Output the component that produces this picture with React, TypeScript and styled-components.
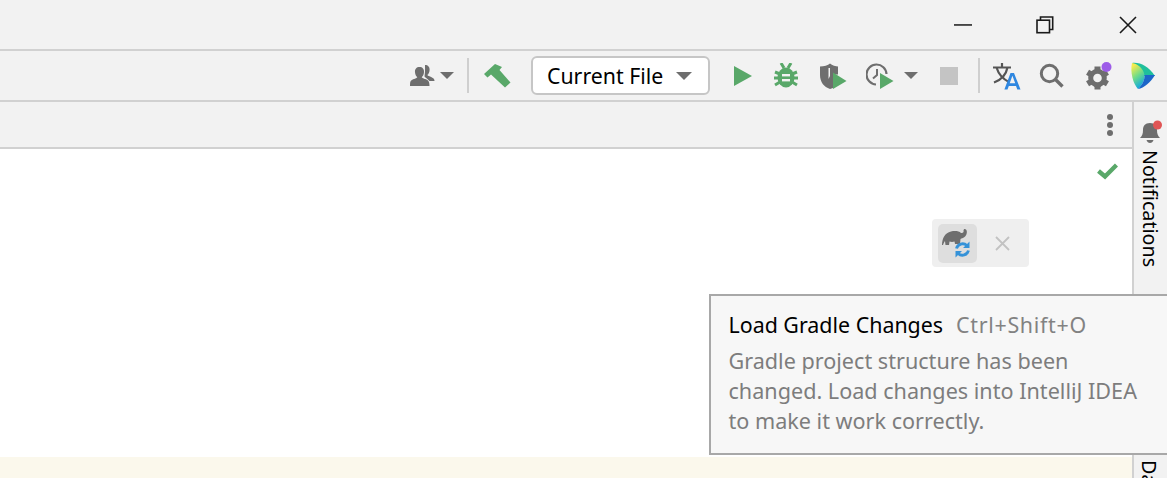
import React from "react";
import styled, { createGlobalStyle } from "styled-components";

const Global = createGlobalStyle`
  html, body { margin: 0; padding: 0; height: 100%; overflow: hidden; background: #f2f2f2; }
  #root { height: 100%; }
  * { box-sizing: border-box; }
`;

const FONT = `"Noto Sans", "Open Sans", "Liberation Sans", sans-serif`;

const Frame = styled.div`
  position: relative;
  width: 1167px;
  height: 478px;
  overflow: hidden;
  display: flex;
  flex-direction: column;
  font-family: ${FONT};
  background: #f2f2f2;
`;

const TitleBar = styled.div`
  height: 51px;
  flex: none;
  border-bottom: 2px solid #d1d1d1;
  display: flex;
  justify-content: flex-end;
`;

const WinButton = styled.div`
  width: 82px;
  height: 49px;
  padding-top: 1px;
  display: flex;
  align-items: center;
  justify-content: center;
  &:last-child {
    width: 78px;
    margin-left: 3px;
  }
`;

const Toolbar = styled.div`
  height: 51px;
  flex: none;
  border-bottom: 2px solid #d1d1d1;
  display: flex;
  align-items: center;
  justify-content: flex-end;
  padding-right: 11px;
`;

const ToolIcon = styled.div<{ $w?: number; $ml?: number }>`
  width: ${(p) => p.$w ?? 26}px;
  height: 30px;
  margin-left: ${(p) => p.$ml ?? 0}px;
  flex: none;
  display: flex;
  align-items: center;
  justify-content: center;
`;

const Sep = styled.div<{ $ml: number }>`
  width: 2px;
  height: 35px;
  margin-left: ${(p) => p.$ml}px;
  background: #cfcfcf;
  flex: none;
`;

const ConfigBox = styled.div`
  width: 179px;
  height: 39px;
  margin-left: 20px;
  flex: none;
  background: #fff;
  border: 2px solid #c6c6c6;
  border-radius: 6px;
  display: flex;
  align-items: center;
  padding-left: 14px;
  color: #000;
  font-size: 21.3px;
  white-space: nowrap;
`;

const Caret = styled.span<{ $ml: number; $s?: number }>`
  width: 0;
  height: 0;
  margin-left: ${(p) => p.$ml}px;
  border-left: ${(p) => p.$s ?? 8}px solid transparent;
  border-right: ${(p) => p.$s ?? 8}px solid transparent;
  border-top: ${(p) => p.$s ?? 8}px solid #6e6e6e;
  flex: none;
`;

const Body = styled.div`
  flex: 1;
  display: flex;
  min-height: 0;
`;

const Main = styled.div`
  flex: 1;
  display: flex;
  flex-direction: column;
  min-width: 0;
`;

const TabRow = styled.div`
  height: 47px;
  flex: none;
  border-bottom: 2px solid #d1d1d1;
  display: flex;
  align-items: center;
  justify-content: flex-end;
  padding-right: 18px;
`;

const Editor = styled.div`
  flex: 1;
  background: #fff;
  display: flex;
  justify-content: flex-end;
  padding: 14px 14px 0 0;
`;

const InfoBar = styled.div`
  height: 21px;
  flex: none;
  background: #fbf8ec;
`;

const Strip = styled.div`
  width: 35px;
  flex: none;
  border-left: 2px solid #d1d1d1;
  display: flex;
  flex-direction: column;
  align-items: center;
  padding-top: 18px;
  position: relative;
`;

const VerticalLabel = styled.div`
  writing-mode: vertical-rl;
  font-size: 19.7px;
  line-height: 20px;
  color: #000;
  white-space: nowrap;
  margin: 4px 2px 0 0;
`;

const BottomLabel = styled(VerticalLabel)`
  position: absolute;
  top: 354px;
  left: 5px;
  height: 22px;
  overflow: hidden;
  margin: 4px 0 0;
`;

const FloatBar = styled.div`
  position: absolute;
  left: 932px;
  top: 219px;
  width: 97px;
  height: 48px;
  background: #efefef;
  border-radius: 4px;
  display: flex;
  align-items: center;
  padding-left: 6px;
`;

const FloatAction = styled.div`
  width: 39px;
  height: 39px;
  background: #dedede;
  border-radius: 5px;
  display: flex;
  align-items: center;
  justify-content: center;
`;

const FloatClose = styled.div`
  margin-left: 18px;
  display: flex;
`;

const Tip = styled.div`
  position: absolute;
  left: 709px;
  top: 294px;
  width: 470px;
  height: 161px;
  background: #f7f7f7;
  border: 2px solid #a8a8a8;
  padding: 14px 0 0 17.5px;
`;

const TipHead = styled.div`
  display: flex;
  font-size: 21.4px;
  line-height: 30px;
  white-space: nowrap;
`;

const TipTitle = styled.span`
  color: #000;
`;

const TipKey = styled.span`
  color: #828282;
  margin-left: 13px;
  letter-spacing: 0.7px;
`;

const TipText = styled.div`
  color: #7d7d7d;
  font-size: 21.6px;
  line-height: 30px;
  margin-top: 6px;
  white-space: pre;
`;

const Minimize = () => (
  <svg width="18" height="2" style={{ display: "block" }}><rect width="18" height="1.5" y="0.2" fill="#1a1a1a" /></svg>
);
const Restore = () => (
  <svg width="18" height="18" viewBox="0 0 18 18" fill="none" stroke="#1a1a1a" strokeWidth="1.6">
    <rect x="1" y="4.2" width="12.5" height="12.5" />
    <path d="M4.5 4V1h12.2v12.5h-3" />
  </svg>
);
const CloseX = () => (
  <svg width="18" height="18" viewBox="0 0 18 18" stroke="#1a1a1a" strokeWidth="1.6"><path d="M1 1l16 16M17 1L1 17" /></svg>
);

const UserIcon = () => (
  <svg width="25" height="23" viewBox="0 0 25 23" fill="#6e6e6e">
    <path d="M15 1c3 0 4.800 2 4.600 5-.2 2.500-1 4-2.300 5 .5 1 3.500 1.500 5.500 3 1.200.8 1.700 1.500 1.700 3h-5c-1.500-2-4-3-5-4.500l.5-4.500c0-3 0-6 0-7z" />
    <path d="M9.500 3c3 0 4.800 2 4.500 5.200-.2 2.300-1 4-2.300 5 .6 1.200 4 1.600 6 3 1 .8 1.800 2 1.800 5.800H0c0-3.800.3-5 1.500-5.800 2-1.400 5.200-1.800 5.800-3C6 12.200 5.200 10.500 5 8.200 4.700 5 6.500 3 9.500 3z" />
    <path d="M14.500 4.200c-.6-1-1.100-1.500-1.600-1.800M13.500 13.500l1 .8" stroke="#f2f2f2" strokeWidth="1" fill="none" />
  </svg>
);
const Hammer = () => (
  <svg width="27" height="24" viewBox="0 0 27 24" fill="#59a869">
    <path d="M0 10 11 0l7 3-2.500 3L26.500 18.500 21 23.500 7 10.500 3.500 13.500z" />
  </svg>
);
const Play = ({ size = 20 }: { size?: number }) => (
  <svg width={size} height={size} viewBox="0 0 20 20" fill="#59a869"><path d="M1 0l18 10L1 20z" /></svg>
);
const Bug = () => (
  <svg width="24" height="25" viewBox="0 0 24 25">
    <path fill="none" stroke="#59a869" strokeWidth="3" d="M1 9l5 2M23 9l-5 2M0 15h5M24 15h-5M1 22l5-3M23 22l-5-3M7 0l3 5M17 0l-3 5" />
    <ellipse cx="12" cy="14.500" rx="8.500" ry="10" fill="#59a869" />
    <rect x="8" y="11" width="8" height="2.400" fill="#f2f2f2" />
    <rect x="8" y="16" width="8" height="2.400" fill="#f2f2f2" />
  </svg>
);
const Coverage = () => (
  <svg width="28" height="26" viewBox="0 0 28 26">
    <path fill="#6e6e6e" d="M1 3.500C5 3.500 9 2.500 11 .5c2 2 6 3 8 3v8h-3v12l-2 1.500-3 1C5 24 1 19 1 12z" />
    <path fill="#f2f2f2" d="M9.500 5h1.500v8l-1.500 3z" />
    <path fill="#59a869" d="M14 9.500 27.500 18 14 26z" />
  </svg>
);
const Profiler = () => (
  <svg width="28" height="26" viewBox="0 0 28 26">
    <path fill="none" stroke="#6e6e6e" strokeWidth="2.200" d="M10 21.500A10 10 0 1 1 20.500 11" />
    <path fill="none" stroke="#6e6e6e" strokeWidth="2" d="M11 6v6l-4 3.500" />
    <path fill="#59a869" d="M14 10l13.500 8L14 26z" />
  </svg>
);
const Stop = () => (
  <svg width="18" height="18"><rect width="18" height="18" fill="#c4c4c4" /></svg>
);
const Translate = () => (
  <svg width="29" height="28" viewBox="0 0 29 28">
    <path fill="none" stroke="#555" strokeWidth="2.200" d="M1 5.500h18M10 1v4.500M15.500 5.500C14 13 9 18 2 20.500M4.500 5.500C6.500 12 11 17 17 20" />
    <path fill="#2f87e0" d="M18.500 11h3.500L28.500 27.500h-3.200l-1.300-3.600h-7.200l-1.300 3.600h-3.100zm4.700 10.200-2.800-7.400-2.700 7.400z" />
  </svg>
);
const Search = () => (
  <svg width="25" height="25" viewBox="0 0 25 25" fill="none" stroke="#6e6e6e"><circle cx="10.500" cy="10.500" r="8.200" strokeWidth="3" /><path d="M16.500 16.500l7 7" strokeWidth="3.400" /></svg>
);
const Gear = () => (
  <svg width="26" height="28" viewBox="0 0 26 28">
    <g transform="translate(0 3)">
      <circle cx="11.500" cy="13" r="6.800" fill="none" stroke="#6e6e6e" strokeWidth="5" />
      {[0, 60, 120, 180, 240, 300].map((a) => (
        <rect key={a} x="8.500" y="1.500" width="6" height="4.500" fill="#6e6e6e" transform={`rotate(${a} 11.500 13)`} />
      ))}
    </g>
    <circle cx="20.500" cy="5" r="5" fill="#9d5ce8" />
  </svg>
);
const Logo = () => (
  <svg width="26" height="28" viewBox="0 0 26 28">
    <defs>
      <linearGradient id="lg" x1="0.100" y1="0" x2="0.500" y2="1">
        <stop offset="0.100" stopColor="#f6ec4e" />
        <stop offset="0.550" stopColor="#6ddb8a" />
        <stop offset="1" stopColor="#12a8e0" />
      </linearGradient>
    </defs>
    <path fill="#1fbf9c" d="M2 1C10 0 18 4 25 14L14 14z" />
    <path fill="url(#lg)" d="M2 1C8 2 13 6 14.500 13 15 18 12 23 8 27 3 22 0 10 2 1z" />
    <path fill="#1c66c8" d="M14.500 13H25C21 20 14 26 8 27 12 23 15 18 14.500 13z" />
  </svg>
);
const Dots = () => (
  <svg width="8" height="24" viewBox="0 0 8 24" fill="#6e6e6e"><circle cx="4" cy="4" r="3" /><circle cx="4" cy="12" r="3" /><circle cx="4" cy="20" r="3" /></svg>
);
const Check = () => (
  <svg width="21" height="17" viewBox="0 0 21 17"><path fill="none" stroke="#59a869" strokeWidth="4.400" d="M1.500 8l6.500 5.500L19.500 2" /></svg>
);
const Bell = () => (
  <svg width="24" height="26" viewBox="0 0 24 26">
    <path fill="#6e6e6e" d="M11 3c5 0 7 3 7 7 0 4 1 6 3 8H1c2-2 3-4 3-8 0-4 2-7 7-7z" />
    <path fill="#6e6e6e" d="M7.500 20h7c-.5 2-2 3-3.500 3s-3-1-3.500-3z" />
    <circle cx="18.500" cy="5" r="4.500" fill="#e05555" />
  </svg>
);
const GradleSync = () => (
  <svg width="33" height="33" viewBox="0 0 33 33">
    <path fill="#6e6e6e" d="M1 18C1 11 4 6 10 4.500c4-1 8-.5 10 1.500 2 .5 3-1 2.500-2.500 0-1.500 1.500-2 2.500-1 1.500 1.500 1 5.500-1.500 7.500-1.500 1-3 1.500-4 2l-.5 5h-5l-.5-2.500c-1.500.5-3.500.5-5 0L8 18H4.500L4 14c-1 1-1.500 3-2 4z" />
    <g fill="none" stroke="#3592d8" strokeWidth="2.900">
      <path d="M15.500 21.500a6.200 6.200 0 0 1 10.300-3" />
      <path d="M27.500 23.500a6.200 6.200 0 0 1-10.300 3" />
    </g>
    <path fill="#3592d8" d="M28.500 14.500V21H22zM14.500 30.500V24H21z" />
  </svg>
);
const FloatX = () => (
  <svg width="15" height="15" viewBox="0 0 15 15" stroke="#c2c2c2" strokeWidth="1.800"><path d="M1 1l13 13M14 1L1 14" /></svg>
);

export default function App() {
  return (
    <Frame>
      <Global />
      <TitleBar>
        <WinButton><Minimize /></WinButton>
        <WinButton><Restore /></WinButton>
        <WinButton><CloseX /></WinButton>
      </TitleBar>
      <Toolbar>
        <ToolIcon $w={25}><UserIcon /></ToolIcon>
        <Caret $ml={5} $s={7} />
        <Sep $ml={13} />
        <ToolIcon $w={28} $ml={14}><Hammer /></ToolIcon>
        <ConfigBox>
          Current File
          <Caret $ml={13} />
        </ConfigBox>
        <ToolIcon $w={20} $ml={23}><Play /></ToolIcon>
        <ToolIcon $w={26} $ml={20}><Bug /></ToolIcon>
        <ToolIcon $w={28} $ml={20}><Coverage /></ToolIcon>
        <ToolIcon $w={28} $ml={19}><Profiler /></ToolIcon>
        <Caret $ml={10} $s={7} />
        <ToolIcon $w={18} $ml={22}><Stop /></ToolIcon>
        <Sep $ml={20} />
        <ToolIcon $w={29} $ml={12}><Translate /></ToolIcon>
        <ToolIcon $w={25} $ml={18}><Search /></ToolIcon>
        <ToolIcon $w={26} $ml={22}><Gear /></ToolIcon>
        <ToolIcon $w={26} $ml={18}><Logo /></ToolIcon>
      </Toolbar>
      <Body>
        <Main>
          <TabRow><Dots /></TabRow>
          <Editor><Check /></Editor>
          <InfoBar />
        </Main>
        <Strip>
          <Bell />
          <VerticalLabel>Notifications</VerticalLabel>
          <BottomLabel>Database</BottomLabel>
        </Strip>
      </Body>
      <FloatBar>
        <FloatAction><GradleSync /></FloatAction>
        <FloatClose><FloatX /></FloatClose>
      </FloatBar>
      <Tip>
        <TipHead>
          <TipTitle>Load Gradle Changes</TipTitle>
          <TipKey>Ctrl+Shift+O</TipKey>
        </TipHead>
        <TipText>{"Gradle project structure has been\nchanged. Load changes into IntelliJ IDEA\nto make it work correctly."}</TipText>
      </Tip>
    </Frame>
  );
}
